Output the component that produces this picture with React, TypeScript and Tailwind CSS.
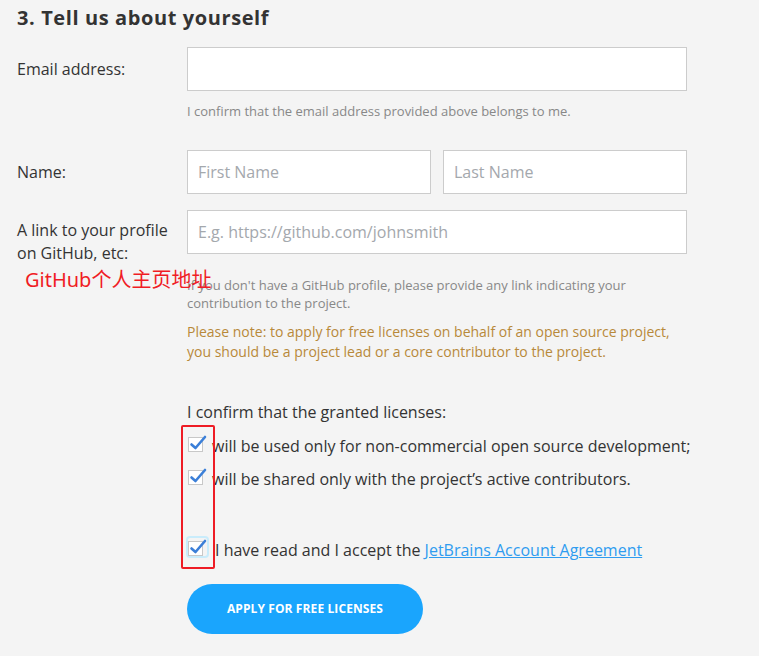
import React from "react";

function Check() {
  return (
    <svg width="19" height="18" viewBox="0 0 19 18" className="shrink-0">
      <rect x="0.5" y="3.5" width="14" height="14" fill="#fff" stroke="#c8c8c8" />
      <path d="M3.5 10.5 L7.5 14 L17 3" fill="none" stroke="#3b7fd8" strokeWidth="2.6" strokeLinecap="round" strokeLinejoin="round" />
    </svg>
  );
}

export default function App() {
  const input =
    "h-[44px] border border-[#cccccc] bg-white px-[10px] text-[16px] text-[#333] placeholder:text-[#a4a8ad] outline-none";

  return (
    <div
      className="relative min-h-[656px] w-full bg-[#f4f4f4] px-[17px] pt-[4px] text-[#333]"
      style={{ fontFamily: '"Open Sans", "Noto Sans", sans-serif' }}
    >
      <h1 className="text-[20px] font-bold leading-[28px] tracking-[0.6px] text-[#333]">3. Tell us about yourself</h1>

      {/* Email */}
      <div className="mt-[15px] flex">
        <div className="w-[170px] pt-[10px] text-[16px] leading-[24px]">Email address:</div>
        <div className="w-[500px]">
          <input className={`${input} w-full`} />
          <p className="mt-[11px] text-[13px] leading-[18px] text-[#888]">
            I confirm that the email address provided above belongs to me.
          </p>
        </div>
      </div>

      {/* Name */}
      <div className="mt-[30px] flex">
        <div className="w-[170px] pt-[10px] text-[16px] leading-[24px]">Name:</div>
        <div className="flex w-[500px] gap-[12px]">
          <input className={`${input} w-[244px]`} placeholder="First Name" />
          <input className={`${input} w-[244px]`} placeholder="Last Name" />
        </div>
      </div>

      {/* GitHub */}
      <div className="mt-[16px] flex">
        <div className="w-[170px] pt-[9px] text-[16px] leading-[23px]">
          A link to your profile
          <br />
          on GitHub, etc:
        </div>
        <div className="w-[510px]">
          <input className={`${input} w-[500px]`} placeholder="E.g. https://github.com/johnsmith" />
          <p className="mt-[22px] text-[13px] leading-[18px] text-[#888]">
            If you don't have a GitHub profile, please provide any link indicating your
            <br />
            contribution to the project.
          </p>
          <p className="mt-[10px] text-[14px] leading-[20px] text-[#b8893a]">
            Please note: to apply for free licenses on behalf of an open source project,
            <br />
            you should be a project lead or a core contributor to the project.
          </p>

          <p className="mt-[38px] text-[16px] leading-[24px]">I confirm that the granted licenses:</p>
          <div className="mt-[10px] flex items-center gap-[5px] text-[16px] leading-[24px]">
            <div className="-mt-[6px] ml-[1px]">
              <Check />
            </div>
            <span>will be used only for non-commercial open source development;</span>
          </div>
          <div className="mt-[9px] flex items-center gap-[5px] text-[16px] leading-[24px]">
            <div className="-mt-[6px] ml-[1px]">
              <Check />
            </div>
            <span>will be shared only with the project’s active contributors.</span>
          </div>
          <div className="mt-[47px] flex items-center gap-[8px] text-[16px] leading-[24px]">
            <div className="-mt-[6px] ml-[1px] rounded-[2px] shadow-[0_0_0_2px_#c9ecfb]">
              <Check />
            </div>
            <span>
              I have read and I accept the{" "}
              <a href="#" className="text-[#2f9cf0] underline">
                JetBrains Account Agreement
              </a>
            </span>
          </div>

          <button className="mt-[22px] h-[50px] w-[236px] rounded-full bg-[#1aa5fd] text-[12px] font-bold tracking-[0.1px] text-white">
            APPLY FOR FREE LICENSES
          </button>
        </div>
      </div>

      {/* annotations */}
      <div
        className="absolute left-[25px] top-[267px] text-[20px] leading-[26px] text-[#f01c24]"
        style={{ fontFamily: '"Noto Sans", "Noto Sans CJK SC", sans-serif' }}
      >
        GitHub个人主页地址
      </div>
      <div className="absolute left-[181px] top-[425px] h-[144px] w-[34px] rounded-[2px] border-2 border-[#ee1c25]" />
    </div>
  );
}
